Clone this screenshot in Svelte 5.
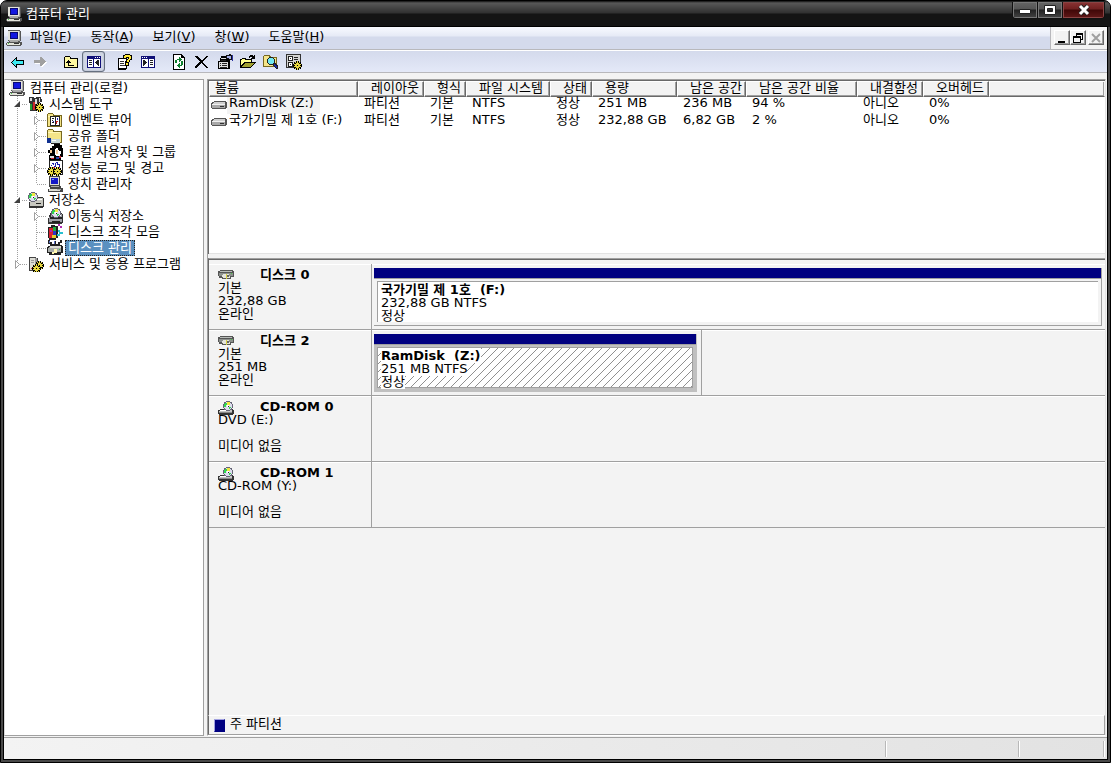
<script>
	let selected = $state('디스크 관리');

	const menus = [
		['파일', 'F'],
		['동작', 'A'],
		['보기', 'V'],
		['창', 'W'],
		['도움말', 'H'],
	];

	const tools = [
		[
			{ icon: 'back', label: '뒤로' },
			{ icon: 'forward', label: '앞으로' },
		],
		[
			{ icon: 'up', label: '한 수준 위로' },
			{ icon: 'panel', label: '콘솔 트리 표시', active: true },
		],
		[
			{ icon: 'help', label: '도움말' },
			{ icon: 'panelRight', label: '작업 창 표시' },
		],
		[
			{ icon: 'refresh', label: '새로 고침' },
			{ icon: 'delete', label: '삭제' },
			{ icon: 'props', label: '속성' },
			{ icon: 'open', label: '열기' },
			{ icon: 'find', label: '찾기' },
			{ icon: 'settings', label: '설정' },
		],
	];

	// guides: one entry per indent level
	// v = line through, t = branch, l = last branch, plus + collapsed / - expanded
	const tree = [
		{ name: '컴퓨터 관리(로컬)', icon: 'computer', guides: [] },
		{ name: '시스템 도구', icon: 'tools', guides: ['t-'] },
		{ name: '이벤트 뷰어', icon: 'events', guides: ['v', 't+'] },
		{ name: '공유 폴더', icon: 'shared', guides: ['v', 't+'] },
		{ name: '로컬 사용자 및 그룹', icon: 'users', guides: ['v', 't+'] },
		{ name: '성능 로그 및 경고', icon: 'perf', guides: ['v', 't+'] },
		{ name: '장치 관리자', icon: 'device', guides: ['v', 'l'] },
		{ name: '저장소', icon: 'storage', guides: ['t-'] },
		{ name: '이동식 저장소', icon: 'removable', guides: ['v', 't+'] },
		{ name: '디스크 조각 모음', icon: 'defrag', guides: ['v', 't'] },
		{ name: '디스크 관리', icon: 'diskmgmt', guides: ['v', 'l'] },
		{ name: '서비스 및 응용 프로그램', icon: 'services', guides: ['l+'] },
	];

	const columns = ['볼륨', '레이아웃', '형식', '파일 시스템', '상태', '용량', '남은 공간', '남은 공간 비율', '내결함성', '오버헤드'];

	const volumes = [
		['RamDisk (Z:)', '파티션', '기본', 'NTFS', '정상', '251 MB', '236 MB', '94 %', '아니오', '0%'],
		['국가기밀 제 1호 (F:)', '파티션', '기본', 'NTFS', '정상', '232,88 GB', '6,82 GB', '2 %', '아니오', '0%'],
	];

	const disks = [
		{ name: '디스크 0', icon: 'disk', lines: ['기본', '232,88 GB', '온라인'], share: 100,
			part: { name: '국가기밀 제 1호  (F:)', size: '232,88 GB NTFS', state: '정상' } },
		{ name: '디스크 2', icon: 'disk', lines: ['기본', '251 MB', '온라인'], share: 45,
			part: { name: 'RamDisk  (Z:)', size: '251 MB NTFS', state: '정상', active: true } },
		{ name: 'CD-ROM 0', icon: 'cdrom', lines: ['DVD (E:)', '', '미디어 없음'] },
		{ name: 'CD-ROM 1', icon: 'cdrom', lines: ['CD-ROM (Y:)', '', '미디어 없음'] },
	];
</script>

{#snippet gear(x, y)}
	<g transform="translate({x} {y})">
		<path fill="#000" d="M3 0h3v1h2v2h1v3h-1v2h-2v1h-3v-1h-2v-2h-1v-3h1v-2h2z" />
		<path fill="#e8d840" d="M4 0h1v2h1v-1h1v1h-1v1h2v1h-1v1h1v1h-2v1h1v1h-1v-1h-1v2h-1v-2h-1v1h-1v-1h1v-1h-2v-1h1v-1h-1v-1h2v-1h-1v-1h1v1h1z" />
		<path fill="#000" d="M4 4h1v1h-1z" />
	</g>
{/snippet}

{#snippet cd(x, y)}
	<g transform="translate({x} {y})">
		<path fill="#667" d="M3 0h4v1h2v2h1v4h-1v2h-2v1h-4v-1h-2v-2h-1v-4h1v-2h2z" />
		<path fill="#dde" d="M3 1h4v1h1v1h1v4h-1v1h-1v1h-4v-1h-1v-1h-1v-4h1v-1h1z" />
		<path fill="#30d850" d="M1 3h1v-1h2v2h-1v2h-2zM6 6h2v1h-1v1h-1z" />
		<path fill="#f0e840" d="M4 1h3v3h-3z" />
		<path fill="#fff" d="M4 4h2v2h-2z" />
		<path fill="#222" d="M5 5h1v1h-1z" />
	</g>
{/snippet}

{#snippet monitor()}
	<path fill="#555" d="M2 0h12v1h1v10h-1v1h2v3h-1v1h-14v-1h-1v-2h1v-1h2v-1h-1z" />
	<path fill="#e4e4dc" d="M2 1h11v9h-11zM1 13h13v2h-13z" />
	<path fill="#0a0a70" d="M4 2h8v7h-8z" />
	<path fill="#1418e0" d="M5 3h6v5h-6z" />
	<path fill="#aaa" d="M13 1h1v10h-1zM3 10h10v1h-10zM4 11h8v1h-8z" />
	<path fill="#333" d="M8 13h5v1h-5z" />
	<path fill="#4c4" d="M2 13h1v1h-1z" />
{/snippet}

{#snippet icon(name)}
	<svg class="icon" viewBox="0 0 16 16" shape-rendering="crispEdges" aria-hidden="true">
		{#if name === 'computer'}
			{@render monitor()}
		{:else if name === 'back'}
			<path fill="#3fe8f0" stroke="#000" d="M2.5 8.5l5-5v3h7v4h-7v3z" />
		{:else if name === 'forward'}
			<path fill="#fff" d="M9 4h1v1h1v1h1v1h1v1h2v1h-1v1h-1v1h-1v1h-1v1h-2v-3h-6v-1h6z" />
			<path fill="#a0a0a0" d="M8 3h2v1h1v1h1v1h1v1h1v1h-1v1h-1v1h-1v1h-1v1h-2v-3h-6v-3h6z" />
		{:else if name === 'up'}
			<path fill="#000" d="M2 2h5v1h1v1h7v10h-14v-11h1z" />
			<path fill="#fff8a0" d="M2 3h5v2h7v8h-12z" />
			<path fill="#000" d="M5 6h1v1h1v1h1v1h-2v2h5v1h-6v-3h-2v-1h1v-1h1z" />
		{:else if name === 'panel' || name === 'panelRight'}
			<g transform={name === 'panel' ? '' : 'translate(16 0) scale(-1 1)'}>
				<path fill="#101078" d="M1 2h14v12h-14z" />
				<path fill="#fff" d="M2 5h5v8h-5zM8 5h6v8h-6z" />
				<path fill="#fff" d="M9 3h1v1h-1zM11 3h1v1h-1zM13 3h1v1h-1z" />
				<path fill="#222" d="M3 6h3v1h-3zM3 8h3v1h-3zM3 10h3v1h-3zM12 6h1v6h-1v-1h-1v-1h-1v-1h-1v-1h1v-1h1v-1h1z" />
			</g>
		{:else if name === 'help'}
			<path fill="#000" d="M1 4h9v11h-1v1h-8z" />
			<path fill="#fff" d="M2 5h7v9h-7z" />
			<path fill="#333" d="M3 7h4v1h-4zM3 9h4v1h-4zM3 11h5v1h-5z" />
			<path fill="#000" d="M8 0h5v1h2v5h-2v2h-1v4h-4v-5h2v-2h1v-1h-1v1h-4v-4h2z" />
			<path fill="#ffe838" d="M8 1h5v1h1v3h-1v1h-1v2h-2v-2h1v-1h1v-2h-3v1h-2v-2h1zM9 9h2v2h-2z" />
		{:else if name === 'refresh'}
			<path fill="#000" d="M2 0h9v1h1v1h1v1h1v13h-12z" />
			<path fill="#fff" d="M3 1h7v3h3v11h-10z" />
			<path fill="#108030" d="M5 6h1v-1h2v-2h1v1h1v1h1v1h-1v1h-1v1h-1v-2h-2v3h-2v-3zM10 7h2v4h-1v1h-2v2h-1v-1h-1v-1h-1v-1h1v-1h1v-1h1v2h1z" />
		{:else if name === 'delete'}
			<path fill="#000" d="M1 2h3v1h1v1h1v1h1v1h2v-1h1v-1h1v-1h1v-1h2v1h-1v1h-1v1h-1v1h-1v1h-1v2h1v1h1v1h1v1h1v1h1v1h-2v-1h-1v-1h-1v-1h-1v-1h-1v-1h-1v1h-1v1h-1v1h-1v1h-1v1h-2v-2h1v-1h1v-1h1v-1h1v-1h1v-1h-1v-1h-1v-1h-1v-1h-1v-1h-1z" />
		{:else if name === 'props'}
			<path fill="#000" d="M4 2h7v1h1v2h1v10h-12v-8h2v-3h1z" />
			<path fill="#ddd" d="M2 8h9v6h-9zM4 4h5v1h-5z" />
			<path fill="#222" d="M3 9h1v1h-1zM5 9h5v1h-5zM3 11h1v1h-1zM5 11h5v1h-5zM3 13h7v1h-7zM4 6h5v1h-5z" />
			<path fill="#111" d="M9 1h3v-1h2v1h1v5h-3v-1h-3z" />
			<path fill="#a8b0e8" d="M10 2h4v3h-2v-1h-2z" />
			<path fill="#2830a0" d="M15 1h1v6h-1z" />
		{:else if name === 'open'}
			<path fill="#000" d="M2 4h4v1h6v3h4v1h-1v1h-1v1h-1v1h-1v1h-1v1h-11v-9h2zM9 2h1v-1h3v1h1v-1h1v4h-4v-1h1v-1h-2v1h-1z" />
			<path fill="#ffff90" d="M2 5h3v1h6v2h-7v1h-1v1h-1v1h-1v-5h1z" />
			<path fill="#a0a030" d="M5 9h9v1h-1v1h-1v1h-1v1h-9v-1h1v-1h1v-1h1z" />
		{:else if name === 'find'}
			<path fill="#776820" d="M1 1h6v1h1v1h6v10h-14v-11h1z" />
			<path fill="#f4e488" d="M1 2h5v2h7v8h-12z" />
			<path fill="#222" d="M6 3h4v1h1v1h1v4h1v1h1v1h1v4h-2v-1h-1v-1h-1v-1h-1v-1h-4v-1h-1v-1h-1v-4h1v-1h1z" />
			<path fill="#70e8f0" d="M6 4h4v1h1v4h-1v1h-4v-1h-1v-4h1z" />
			<path fill="#1828a8" d="M11 10h1v1h1v1h1v2h-1v-1h-1v-1h-1z" />
		{:else if name === 'settings'}
			<path fill="#333" d="M0 0h15v14h-15z" />
			<path fill="#d4d4d4" d="M1 1h13v12h-13z" />
			<path fill="#222" d="M2 2h5v5h-5zM8 3h4v1h-4zM8 5h4v1h-4zM2 8h5v5h-5z" />
			<path fill="#fff" d="M3 3h3v3h-3zM3 9h3v3h-3z" />
			<path fill="#222" d="M4 4h1v1h-1zM4 10h1v1h-1z" />
			{@render gear(7, 7)}
		{:else if name === 'tools'}
			<path fill="#333" d="M1 1h5v1h2v-1h5v2h1v3h-2v2h2v7h-12v-8h-1z" />
			<path fill="#ddd" d="M2 2h2v3h-2zM7 3h2v5h-2zM11 2h1v4h-1z" />
			<path fill="#20a030" d="M2 8h2v6h-2z" />
			<path fill="#d02828" d="M5 6h2v8h-2z" />
			<path fill="#4088d8" d="M8 8h3v3h-3z" />
			{@render gear(7, 7)}
		{:else if name === 'events' || name === 'shared'}
			<path fill="#776820" d="M1 1h5v1h1v1h8v12h-15v-13h1z" />
			<path fill="#f4e488" d="M1 2h5v2h8v10h-13z" />
			<path fill="#fff8b8" d="M1 4h12v1h-12z" />
			{#if name === 'events'}
				<path fill="#222" d="M3 4h10v10h-10z" />
				<path fill="#fff" d="M4 5h4v8h-4zM9 5h3v8h-3z" />
				<path fill="#222" d="M5 6h2v1h-2zM5 8h1v1h-1zM5 10h2v1h-2z" />
				<path fill="#d02020" d="M9 9h1v3h-1zM10 9h1v1h-1z" />
				<path fill="#2828c0" d="M10 6h1v2h-1zM6 9h1v1h-1z" />
			{:else}
				<path fill="#103090" d="M0 10h4v5h-4z" />
				<path fill="#c8d8d8" d="M4 11h9v4h-9z" />
				<path fill="#222" d="M4 15h9v1h-9z" />
				<path fill="#fff" d="M5 12h4v1h-4z" />
			{/if}
		{:else if name === 'users'}
			<path fill="#000" d="M7 0h6v1h2v3h1v9h-2v3h-12v-5h1v-2h-2v-3h2v-2h2v-2h2z" />
			<path fill="#fff" d="M8 5h1v-1h2v2h1v1h2v3h-1v2h-4v-1h-1z" />
			<path fill="#f4c898" d="M9 6h2v4h-2zM3 6h2v3h-2z" />
			<path fill="#ddd" d="M3 12h4v2h-4z" />
			<path fill="#d02030" d="M12 12h2v2h-2zM4 14h3v1h-3z" />
			<path fill="#2840a8" d="M9 13h3v2h-3z" />
		{:else if name === 'perf'}
			<path fill="#222" d="M2 0h14v15h-14z" />
			<path fill="#fff" d="M3 1h12v13h-12z" />
			<path fill="#2020b0" d="M4 5h1v-2h2v3h1v-3h1v-1h2v2h2v3h-1v-2h-2v-2h-1v4h-2v-2h-1v-1h-1v2h-1z" />
			<path fill="#d03030" d="M5 7h3v1h-3zM11 7h2v1h-2z" />
			{@render gear(0, 7)}
			{@render gear(6, 7)}
		{:else if name === 'device'}
			<path fill="#444" d="M2 0h11v10h1v2h2v4h-15v-3h2v-2h-1z" />
			<path fill="#dcdcd4" d="M3 1h9v8h-9zM2 13h11v2h-11z" />
			<path fill="#1418c8" d="M4 2h7v6h-7z" />
			<path fill="#8098f0" d="M5 3h2v1h-2z" />
			<path fill="#aaa" d="M4 10h8v1h-8zM10 13h4v1h-4z" />
		{:else if name === 'storage' || name === 'removable'}
			<path fill="#333" d="M3 5h12v1h1v9h-1v1h-14v-6h1z" />
			<path fill={name === 'storage' ? '#c8c8c0' : '#a0a0a8'} d="M4 6h11v8h-13v-5h2z" />
			<path fill="#fff" d="M6 7h8v1h-8z" />
			<path fill="#222" d={name === 'storage' ? 'M8 11h5v1h-5z' : 'M3 9h12v2h-12zM5 13h8v2h-8z'} />
			{@render cd(name === 'storage' ? 0 : 4, 0)}
		{:else if name === 'defrag'}
			<path fill="#222" d="M1 3h3v-2h4v1h3v12h-2v2h-7v-2h-1z" />
			<path fill="#d82030" d="M2 4h4v10h-4z" />
			<path fill="#20b040" d="M6 3h3v4h-3z" />
			<path fill="#2838c8" d="M6 7h3v4h-3z" />
			<path fill="#e8d030" d="M5 11h4v3h-4z" />
			<path fill="#b028b0" d="M11 0h2v2h2v2h-2v-2h-2zM3 6h2v2h-2z" />
			<path fill="#28c0d0" d="M11 6h2v2h3v2h-3v2h-3v-2h2z" />
		{:else if name === 'diskmgmt'}
			<path fill="#222" d="M1 0h2v2h2v2h2v-3h2v3h2v-2h2v-2h2v3h-2v2h2v1h1v7h-2v2h-12v-2h-2v-6h1v-1h2v-2h-2z" />
			<path fill="#5870c8" d="M7 1h1v3h-1zM2 1h1v2h-1z" />
			<path fill="#a8aca8" d="M2 7h12v5h-13v-4h1z" />
			<path fill="#dcdcd4" d="M3 6h11v2h-11z" />
			<path fill="#fff8b0" d="M7 9h3v4h-3zM5 12h2v2h-2z" />
			<path fill="#4c4" d="M12 9h1v1h-1z" />
		{:else if name === 'services'}
			<path fill="#444" d="M1 1h7v1h2v12h-1v1h-8z" />
			<path fill="#dcdcd4" d="M2 2h5v12h-5z" />
			<path fill="#999" d="M7 2h2v12h-2zM3 4h3v1h-3zM3 6h3v1h-3z" />
			<path fill="#d33" d="M3 12h2v1h-2z" />
			{@render gear(7, 5)}
			{@render gear(4, 8)}
		{:else if name === 'volume'}
			<path fill="#555" d="M3 4h12v1h1v6h-1v1h-14v-1h-1v-5h1v-1h2z" />
			<path fill="#d0d0d0" d="M3 5h11v2h-12v-1h1z" />
			<path fill="#a8a8a8" d="M1 8h13v3h-13z" />
			<path fill="#f0f0f0" d="M1 7h13v1h-13z" />
			<path fill="#333" d="M9 9h4v1h-4z" />
		{:else if name === 'disk'}
			<path fill="#555" d="M2 2h13v1h1v6h-3v2h-9v-1h-3v-2h-1v-5h2z" />
			<path fill="#b8bcb8" d="M2 3h12v1h-13z" />
			<path fill="#8c908c" d="M1 5h14v3h-14z" />
			<path fill="#e4e4dc" d="M5 6h6v2h1v2h-7v-1h-1v-2h1z" />
			<path fill="#666" d="M9 7h2v2h-2z" />
			<path fill="#d8d040" d="M8 6h1v5h-1z" />
			<path fill="#4c4" d="M13 5h1v1h-1z" />
		{:else if name === 'cdrom'}
			<path fill="#333" d="M2 9h13v1h1v4h-1v1h-14v-1h-1v-4h2z" />
			<path fill="#c4c4c4" d="M2 10h12v2h-13v-1h1z" />
			<path fill="#888" d="M1 12h13v1h-13z" />
			{@render cd(5, 1)}
			<path fill="#fff" d="M2 10h6v1h-6z" />
		{/if}
	</svg>
{/snippet}

{#snippet guide(kind)}
	<svg class="guide" viewBox="0 0 19 16" shape-rendering="crispEdges" aria-hidden="true">
		<g stroke="#a0a0a0" stroke-dasharray="1 1" fill="none">
			<path d={kind[0] === 'l' ? 'M8.5 0V8' : 'M8.5 0V16'} />
			{#if kind[0] !== 'v'}
				<path d="M9 8.5H19" />
			{/if}
		</g>
		{#if kind[1] === '+'}
			<path fill="#fff" stroke="#a0a0a0" shape-rendering="auto" d="M6.5 4.5v8l4-4z" />
		{:else if kind[1] === '-'}
			<path fill="#fff" d="M5 5h7v7h-7z" />
			<path fill="#404040" shape-rendering="auto" d="M11 5v6h-6z" />
		{/if}
	</svg>
{/snippet}

<div class="window">
	<header class="titlebar">
		{@render icon('computer')}
		<h1>컴퓨터 관리</h1>
		<div class="caption-buttons">
			<button aria-label="최소화"><svg viewBox="0 0 12 12"><path fill="#fff" stroke="#222" d="M.5 5.5h11v4h-11z" /></svg></button>
			<button aria-label="최대화"><svg viewBox="0 0 12 12"><path fill="#fff" stroke="#222" fill-rule="evenodd" d="M.5 1.5h11v9h-11zM3.5 4.5h5v3h-5z" /></svg></button>
			<button class="close" aria-label="닫기"><svg viewBox="0 0 12 12"><path fill="none" stroke="#222" stroke-width="5" d="M2 2l8 8M10 2l-8 8" /><path fill="none" stroke="#fff" stroke-width="3" d="M2 2l8 8M10 2l-8 8" /></svg></button>
		</div>
	</header>

	<div class="client">
		<nav class="menubar">
			{@render icon('computer')}
			<div class="menus">
				{#each menus as [name, key]}
					<button class="menu">{name}(<u>{key}</u>)</button>
				{/each}
			</div>
			<div class="mdi">
				<button aria-label="창 최소화"><svg viewBox="0 0 12 12" shape-rendering="crispEdges"><path d="M2 9h7v2h-7z" /></svg></button>
				<button aria-label="창 복원"><svg viewBox="0 0 12 12" shape-rendering="crispEdges"><path fill-rule="evenodd" d="M4 1h7v7h-2v3h-8v-7h3zM5 3v1h4v3h1v-4zM2 6v4h6v-4z" /></svg></button>
				<button class="gap" aria-label="창 닫기" disabled><svg viewBox="0 0 12 12"><path stroke="#a0a0a0" stroke-width="2" d="M2 2l8 8M10 2l-8 8" /></svg></button>
			</div>
		</nav>

		<div class="toolbar">
			{#each tools as group}
				<div class="group">
					{#each group as tool}
						<button class="tool" class:active={tool.active} aria-label={tool.label}>{@render icon(tool.icon)}</button>
					{/each}
				</div>
			{/each}
		</div>

		<main class="workspace">
			<div class="tree">
				{#each tree as item}
					<div class="node">
						{#each item.guides as kind}
							{@render guide(kind)}
						{/each}
						{@render icon(item.icon)}
						<button class="node-name" class:selected={selected === item.name} onclick={() => (selected = item.name)}>{item.name}</button>
					</div>
				{/each}
			</div>

			<div class="detail">
				<section class="list">
					<table>
						<colgroup>
							<col class="c-volume" />
							<col class="c-layout" />
							<col class="c-type" />
							<col class="c-fs" />
							<col class="c-type" />
							<col class="c-size" />
							<col class="c-free" />
							<col class="c-ratio" />
							<col class="c-layout" />
							<col class="c-layout" />
							<col />
						</colgroup>
						<thead>
							<tr>
								{#each columns as column}
									<th>{column}</th>
								{/each}
								<th class="filler"></th>
							</tr>
						</thead>
						<tbody>
							{#each volumes as row, i}
								<tr>
									{#each row as cell, j}
										<td>
											{#if j === 0}
												<div class="volume">
													{@render icon('volume')}
													<span class:current={i === 0}>{cell}</span>
												</div>
											{:else}
												{cell}
											{/if}
										</td>
									{/each}
									<td></td>
								</tr>
							{/each}
						</tbody>
					</table>
				</section>

				<section class="disks">
					{#each disks as disk}
						<div class="disk">
							<div class="disk-info">
								<div class="disk-title">
									{@render icon(disk.icon)}
									<strong>{disk.name}</strong>
								</div>
								{#each disk.lines as line}
									<p>{line}</p>
								{/each}
							</div>
							<div class="disk-space">
								{#if disk.part}
									<div class="slot" class:partial={disk.share < 100} style="width: {disk.share}%">
										<div class="part" class:active={disk.part.active}>
											<div class="stripe"></div>
											<div class="part-body">
												<p><strong>{disk.part.name}</strong></p>
												<p><span>{disk.part.size}</span></p>
												<p><span>{disk.part.state}</span></p>
											</div>
										</div>
									</div>
								{/if}
							</div>
						</div>
					{/each}
				</section>

				<footer class="legend">
					<span class="swatch"></span>
					주 파티션
				</footer>
			</div>
		</main>

		<footer class="status">
			<span class="message"></span>
			<span class="cell"></span>
			<span class="cell small"></span>
		</footer>
	</div>
</div>

<style>
	:global(body) {
		background: #fff;
		font: 13px/16px "DejaVu Sans", "Noto Sans CJK KR", sans-serif;
		color: #000;
	}

	button {
		margin: 0;
		padding: 0;
		border: 0;
		background: none;
		font: inherit;
		color: inherit;
	}

	p {
		margin: 0;
	}

	.icon {
		flex: none;
		display: block;
		width: 16px;
		height: 16px;
	}

	.window {
		box-sizing: border-box;
		display: flex;
		flex-direction: column;
		min-height: 100vh;
		padding: 0 3px 3px;
		border: 1px solid #000;
		border-radius: 7px 7px 0 0;
		background: #484848;
	}

	/* Title bar */

	.titlebar {
		display: flex;
		align-items: center;
		gap: 4px;
		height: 26px;
		margin: 0 -3px;
		padding-left: 5px;
		border-radius: 6px 6px 0 0;
		background: linear-gradient(#111 0, #585858 2px, #303030 12px, #141414 13px, #141414 100%);
		color: #fff;
	}

	h1 {
		flex: 1;
		margin: 0;
		font-size: 13px;
		font-weight: normal;
	}

	.caption-buttons {
		align-self: flex-start;
		display: flex;
		margin: 1px 5px 0 0;
		border: 1px solid #111;
		border-top: 0;
		border-radius: 0 0 4px 4px;
		overflow: hidden;
	}

	.caption-buttons button {
		display: flex;
		align-items: center;
		justify-content: center;
		width: 25px;
		height: 16px;
		border-right: 1px solid #111;
		background: linear-gradient(#666, #555 7px, #222 8px, #444);
		box-shadow: inset 0 0 0 1px #777;
	}

	.caption-buttons .close {
		width: 41px;
		border: 0;
		background: linear-gradient(#8a3434, #702020 7px, #400808 8px, #601818);
		box-shadow: inset 0 0 0 1px #8a4444;
	}

	.caption-buttons svg {
		width: 12px;
		height: 12px;
	}

	.client {
		flex: 1;
		display: flex;
		flex-direction: column;
		background: #f3f3f3;
		box-shadow: 0 0 0 1px #000;
	}

	/* Menu and tools */

	.menubar {
		display: flex;
		height: 22px;
		padding-left: 2px;
		border-bottom: 1px solid #b8b8bc;
		box-shadow: 0 1px #fff;
		margin-bottom: 1px;
		background: linear-gradient(#f8faff, #e6eaf6 9px, #d4daec 10px, #d4daec);
	}

	.menubar > .icon {
		margin-top: 3px;
	}

	.menus {
		flex: 1;
		display: flex;
		gap: 19px;
		margin-left: 8px;
	}

	.menu {
		height: 20px;
	}

	.mdi {
		display: flex;
		align-items: flex-start;
		padding: 3px 3px 0 3px;
		border-left: 1px solid #b8b8bc;
		background: #f3f3f3;
	}

	.mdi button {
		display: flex;
		align-items: center;
		justify-content: center;
		box-sizing: border-box;
		width: 16px;
		height: 15px;
		border: 1px solid;
		border-color: #fff #696969 #696969 #fff;
		box-shadow: inset -1px -1px #a0a0a0;
	}

	.mdi .gap {
		margin-left: 2px;
	}

	.mdi svg {
		width: 12px;
		height: 12px;
	}

	.toolbar {
		display: flex;
		gap: 8px;
		height: 21px;
		padding-left: 1px;
		border-bottom: 1px solid #b8b8bc;
		background: linear-gradient(#d4daec, #e4e9f8);
	}

	.group {
		display: flex;
	}

	.tool {
		box-sizing: border-box;
		display: flex;
		align-items: center;
		justify-content: center;
		width: 23px;
		height: 21px;
	}

	.tool.active {
		border: 1px solid #667080;
		border-radius: 3px;
		background: #d0d6e4;
		box-shadow: inset 0 0 1px #667080;
	}

	/* Panes */

	.workspace {
		flex: 1;
		display: grid;
		grid-template-columns: 200px 1fr;
		gap: 3px;
		padding: 6px 0 1px;
		border-bottom: 1px solid #a0a0a0;
	}

	.tree {
		border: 1px solid #a0a0a0;
		border-left-color: #d8d8d8;
		background: #fff;
	}

	.node {
		display: flex;
		height: 16px;
		padding-left: 4px;
	}

	.guide {
		flex: none;
		width: 19px;
		height: 16px;
	}

	.node-name {
		height: 16px;
		padding: 0 3px;
		margin-left: 2px;
		line-height: 14px;
		white-space: nowrap;
	}

	.node-name.selected {
		background: #5a90c0;
		color: #fff;
		outline: 1px dotted #222;
		outline-offset: -1px;
	}

	.detail {
		display: flex;
		flex-direction: column;
		min-width: 0;
		margin-right: 1px;
		border: 1px solid #a0a0a0;
		border-right-color: #e3e3e3;
		border-bottom-color: #fff;
	}

	.list {
		height: 173px;
		border: 1px solid #696969;
		border-width: 1px 0 0 1px;
		background: #fff;
		box-shadow: inset 0 -1px #e3e3e3;
		overflow: hidden;
	}

	table {
		width: 100%;
		table-layout: fixed;
		border-collapse: separate;
		border-spacing: 0;
		white-space: nowrap;
	}

	.c-volume { width: 149px; }
	.c-layout { width: 66px; }
	.c-type { width: 42px; }
	.c-fs { width: 84px; }
	.c-size { width: 85px; }
	.c-free { width: 69px; }
	.c-ratio { width: 111px; }

	th {
		height: 14px;
		padding: 0 0 0 12px;
		border: 1px solid;
		border-color: #fff #696969 #696969 #fff;
		background: #f3f3f3;
		box-shadow: inset -1px -1px #a0a0a0;
		font-weight: normal;
		line-height: 12px;
		text-align: left;
		vertical-align: top;
	}

	th:first-child {
		padding-left: 5px;
	}

	th.filler {
		border-right-color: #f3f3f3;
	}

	td {
		height: 17px;
		padding: 0 0 0 6px;
		line-height: 12px;
		vertical-align: top;
	}

	td:first-child {
		padding-left: 2px;
	}

	.volume {
		display: flex;
		height: 17px;
	}

	.volume span {
		padding: 0 6px 0 2px;
	}

	.volume .current {
		background: #f3f3f3;
	}

	/* Disk map */

	.disks {
		flex: 1;
		padding-top: 5px;
		border-top: 1px solid #a0a0a0;
		border-left: 1px solid #696969;
		box-shadow: inset 0 1px #696969;
		margin-top: 4px;
	}

	.disk {
		display: grid;
		grid-template-columns: 163px 1fr;
		height: 65px;
		border-bottom: 1px solid #a0a0a0;
		box-shadow: inset 0 1px #fff;
	}

	.disk-info {
		padding: 4px 0 0 9px;
		border-right: 1px solid #a0a0a0;
		line-height: 13px;
	}

	.disk-info p {
		height: 13px;
	}

	.disk-title {
		display: flex;
		gap: 26px;
		height: 13px;
	}

	.slot {
		box-sizing: border-box;
		height: 65px;
		padding: 4px 3px 3px 2px;
	}

	.partial {
		padding-right: 4px;
		border-right: 1px solid #a0a0a0;
	}

	.part {
		box-sizing: border-box;
		height: 58px;
		border: 1px solid #a0a0a0;
		border-top: 0;
		border-left: 0;
	}

	.stripe {
		height: 10px;
		background: #000080;
		border-bottom: 1px solid #a0a0a0;
	}

	.part-body {
		box-sizing: border-box;
		height: 41px;
		margin: 2px 3px 0;
		padding: 1px 3px 0;
		border: 1px solid #a0a0a0;
		border-right: 0;
		border-bottom: 0;
		background: #fff;
		line-height: 13px;
	}

	.part-body p {
		height: 13px;
		white-space: pre;
	}

	.part.active {
		border-color: #c0c0c0;
		background: #c0c0c0;
	}

	.active .part-body {
		border: 1px solid #a0a0a0;
		background: #fff linear-gradient(to bottom right, transparent 47%, #909090 47%, #909090 53%, transparent 53%) 0 0 / 8px 8px;
	}

	.active strong,
	.active span {
		background: #fff;
	}

	.legend {
		display: flex;
		align-items: flex-start;
		gap: 5px;
		height: 18px;
		padding-left: 5px;
		border: 1px solid;
		border-color: #fff #a0a0a0 #a0a0a0 #696969;
	}

	.swatch {
		box-sizing: border-box;
		width: 11px;
		height: 13px;
		margin-top: 3px;
		border: 1px solid #a0a0e0;
		border-right-color: #000080;
		border-bottom-color: #000080;
		background: #000080;
	}

	/* Status bar */

	.status {
		display: flex;
		height: 21px;
		padding: 3px 3px 2px 0;
		box-sizing: border-box;
		background: linear-gradient(to right, #f3f3f3, #e2e2e2);
	}

	.status span {
		box-sizing: border-box;
		border-right: 1px solid #b8b8b8;
		box-shadow: 1px 0 #fff;
	}

	.message {
		flex: 1;
	}

	.cell {
		width: 133px;
	}

	.small {
		width: 85px;
	}
</style>
